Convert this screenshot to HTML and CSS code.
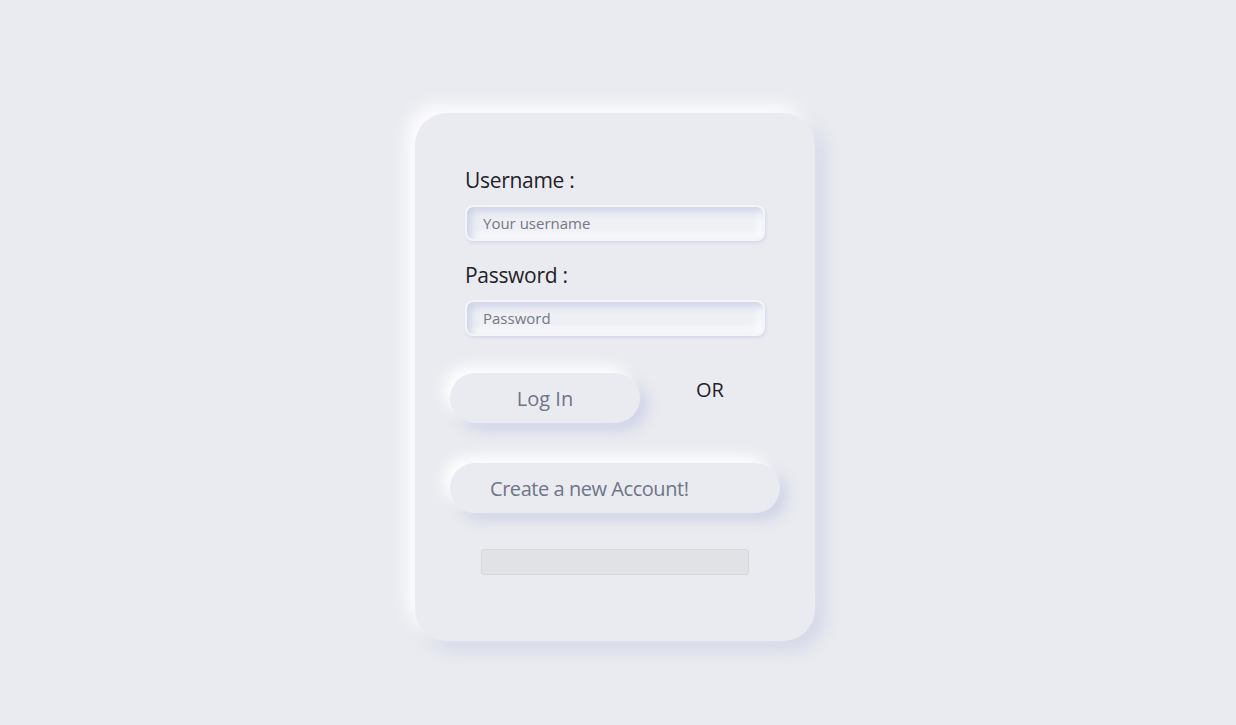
FILE: index.html
```html
<!DOCTYPE html>
<html lang="en">
<head>
<meta charset="utf-8">
<title>Login</title>
<link rel="stylesheet" href="styles.css">
</head>
<body>
<main class="page">
  <form class="card">
    <label class="label" for="user">Username :</label>
    <input class="field" id="user" type="text" placeholder="Your username">
    <label class="label label-pass" for="pass">Password :</label>
    <input class="field" id="pass" type="password" placeholder="Password">
    <div class="actions">
      <button class="btn btn-login" type="button">Log In</button>
      <span class="or">OR</span>
    </div>
    <button class="btn btn-create" type="button">Create a new Account!</button>
    <div class="status"></div>
  </form>
</main>
</body>
</html>
```

FILE: styles.css
```css
* { box-sizing: border-box; }
html, body {
  margin: 0;
  padding: 0;
  background: #eaebf0;
  font-family: "Open Sans", "Noto Sans", sans-serif;
}
.page {
  width: 1236px;
  height: 725px;
  display: flex;
  justify-content: center;
  padding-top: 113px;
  padding-right: 6px;
}
.card {
  width: 400px;
  height: 528px;
  border-radius: 32px;
  background: #eaebf0;
  box-shadow: -8px -8px 18px rgba(255,255,255,0.95), 8px 8px 18px rgba(200,206,228,0.75);
  padding: 54px 50px 0 50px;
  display: flex;
  flex-direction: column;
  align-items: flex-start;
}
.label {
  font-size: 21px;
  line-height: 26px;
  color: #1f2228;
  margin-bottom: 12px;
  letter-spacing: -0.3px;
}
.label-pass { margin-top: 21px; }
.field {
  width: 300px;
  height: 36px;
  border: 2px solid #f4f5f9;
  border-radius: 8px;
  background: #eef0f5;
  box-shadow: inset 4px 4px 8px rgba(200,206,228,0.9), inset -4px -4px 8px rgba(255,255,255,0.95), 1px 2px 3px rgba(200,206,228,0.6);
  padding: 0 16px;
  font-family: inherit;
  font-size: 15px;
  color: #333;
  outline: none;
}
.field::placeholder { color: #737884; }
.actions {
  margin-top: 37px;
  margin-left: -15px;
  display: flex;
  align-items: flex-start;
}
.btn {
  border: none;
  background: #eaebf0;
  font-family: inherit;
  font-size: 20px;
  color: #6e7587;
  height: 50px;
  border-radius: 25px;
  box-shadow: -7px -7px 14px rgba(255,255,255,0.95), 7px 7px 14px rgba(200,206,228,0.85);
  cursor: pointer;
}
.btn-login {
  width: 190px;
  padding-top: 2px;
}
.or {
  font-size: 20px;
  line-height: 26px;
  color: #1f2228;
  margin-left: 56px;
  margin-top: 4px;
}
.btn-create {
  margin-top: 40px;
  margin-left: -15px;
  width: 330px;
  text-align: left;
  padding-left: 40px;
  letter-spacing: -0.45px;
}
.status {
  margin-top: 36px;
  margin-left: 16px;
  width: 268px;
  height: 26px;
  background: #e1e2e6;
  border: 1px solid #d6d7dc;
  border-radius: 3px;
}
```
